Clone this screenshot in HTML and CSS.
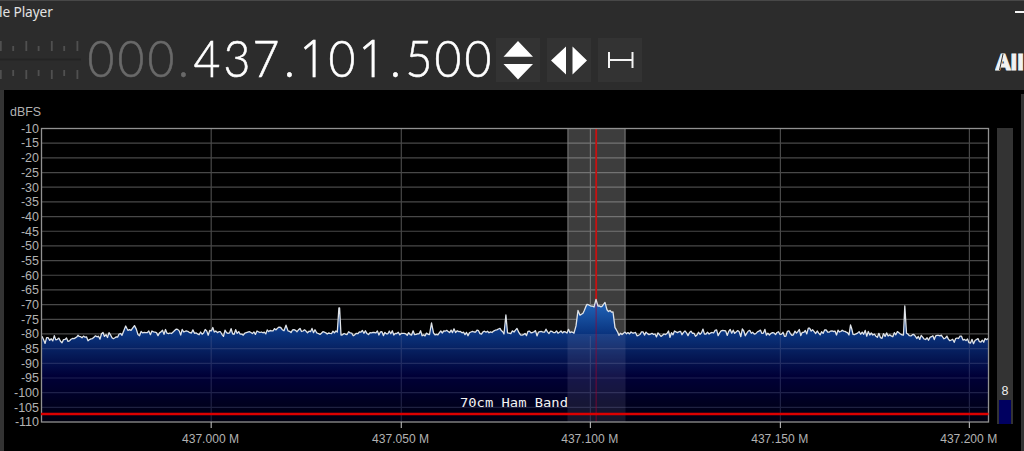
FILE: index.html
```html
<!DOCTYPE html>
<html lang="en">
<head>
<meta charset="utf-8">
<title>Player</title>
<link rel="stylesheet" href="styles.css">
</head>
<body>
<div class="window">
  <header class="titlebar"><span class="title">le Player</span><span class="minimize"></span></header>
  <div class="toolbar">
    <svg class="meter" width="81" height="44" viewBox="0 0 81 44">
      <path class="meter-ticks" d="M.8 4v10M26.3 4v10M51.8 4v10M77.4 4v10M13.2 9v5M38.6 9v5M64.2 9v5M.8 33v9M26.3 33v9M51.8 33v9M77.4 33v9M13.2 33v6M38.6 33v6M64.2 33v6"/>
      <path class="meter-line" d="M0 22.5h81"/>
    </svg>
    <div class="frequency"><span class="dim">0</span><span class="dim">0</span><span class="dim">0</span><span class="dot dim">.</span><span>4</span><span>3</span><span>7</span><span class="dot">.</span><span class="one">1</span><span>0</span><span class="one">1</span><span class="dot">.</span><span>5</span><span>0</span><span>0</span></div>
    <div class="buttons">
      <button class="tool" aria-label="Step"><svg width="44" height="44"><path d="M22 3 37 18.7H7.500zM7.500 26H37L22 41.500z"/></svg></button>
      <button class="tool" aria-label="Tune"><svg width="44" height="44"><path d="M19 8.500v28L4 22.500zM25.500 8.500v28L40 22.500z"/></svg></button>
      <button class="tool" aria-label="Width"><svg width="44" height="44"><path class="span-icon" d="M11 14v16M34.500 14v16M11 22h23.500"/></svg></button>
    </div>
    <svg class="brand" width="29" height="24" viewBox="0 0 29 24">
      <text x="0.500" y="18" textLength="28.500" lengthAdjust="spacingAndGlyphs">AII</text>
      <path d="M4.500 18 8 2"/>
    </svg>
  </div>
  <main class="body">
    <svg class="spectrum" width="986" height="361" viewBox="4 90 986 361">
      <defs>
        <linearGradient id="fill" gradientUnits="userSpaceOnUse" x1="0" y1="300" x2="0" y2="422">
          <stop offset="0" stop-color="#2368bd"/><stop offset=".27" stop-color="#0a3580"/>
          <stop offset=".43" stop-color="#061d5c"/><stop offset=".62" stop-color="#000038"/>
          <stop offset="1" stop-color="#00000f"/>
        </linearGradient>
        <clipPath id="below"><rect x="41" y="336" width="948" height="86"/></clipPath>
      </defs>
      <g id="grid" class="grid"></g>
      <rect class="passband" x="567.500" y="128.500" width="58" height="293.500"/>
      <path class="passband-edge" d="M568 129v293M625 129v293"/>
      <path class="tuning" d="M596.200 129v293"/>
      <path id="area" fill="url(#fill)"/>
      <g clip-path="url(#below)"><g id="gridOver" class="grid grid-over"></g></g>
      <rect class="passband-over" x="567.500" y="334" width="58" height="88"/>
      <path class="tuning-over" d="M596.200 300v122"/>
      <path id="trace" class="trace"/>
      <rect class="frame" x="41.500" y="128.500" width="947" height="293.500"/>
      <path class="band-line" d="M41 414h947.500"/>
      <text class="band-name" x="460" y="407" textLength="108" lengthAdjust="spacingAndGlyphs">70cm Ham Band</text>
      <text class="label" x="10" y="115.500" textLength="31" lengthAdjust="spacingAndGlyphs">dBFS</text>
      <g id="labels" class="label"></g>
    </svg>
    <aside class="side">
      <div class="level"><span class="level-value">8</span><span class="level-bar"></span></div>
      <div class="edge"></div>
    </aside>
  </main>
</div>
<script src="spectrum.js"></script>
</body>
</html>
```
FILE: styles.css
```css
* { box-sizing: border-box; }
body { margin: 0; background: #000; }
.window { width: 1024px; height: 451px; overflow: hidden; background: #2c2c2c; border-top: 1px solid #484848; display: flex; flex-direction: column; }
.titlebar { height: 31px; flex: none; display: flex; justify-content: space-between; overflow: hidden; }
.title { font: 13.700px/21px "Noto Sans", "Open Sans", sans-serif; color: #e2e2e2; letter-spacing: -.1px; margin-left: -1px; white-space: nowrap; }
.minimize { width: 9px; height: 2px; background: #f4f4f4; margin-top: 10px; }
.toolbar { height: 58px; flex: none; display: flex; align-items: flex-start; }
.meter { margin-top: 5px; flex: none; }
.meter-ticks { stroke: #505050; stroke-width: 1.800; }
.meter-line { stroke: #242424; stroke-width: 2; }
.frequency { display: flex; flex: none; margin-left: 5px; width: 409.500px; color: #fff; font: 300 51.500px/51px Lato, sans-serif; -webkit-text-stroke: .6px currentColor; }
.frequency span { width: 29.750px; flex: none; text-align: center; transform: scaleX(.9); }
.frequency .dot { width: 16.600px; display: flex; justify-content: center; }
.frequency .one { font-family: "Open Sans", sans-serif; font-weight: 300; }
.frequency .dim { color: #696969; }
.buttons { display: flex; gap: 7px; padding-top: 6px; flex: none; }
.tool { width: 44px; height: 44px; padding: 0; border: 0; background: #333; display: block; }
.tool svg { display: block; fill: #fff; }
.tool .span-icon { fill: none; stroke: #f4f4f4; stroke-width: 2; }
.brand { margin: 20px 0 0 auto; flex: none; fill: #f2f2f2; font: 900 22.500px Roboto, sans-serif; }
.brand text { stroke: #f2f2f2; stroke-width: .9; }
.brand path { stroke: #2c2c2c; stroke-width: 1; }
.body { flex: 1; display: flex; background: #000; border-left: 4px solid #333; }
.spectrum { display: block; flex: none; overflow: visible; }
.grid { stroke: #484848; stroke-width: 1.200; }
.grid-over { opacity: .28; stroke: #7077a0; }
.passband { fill: #fff; opacity: .24; }
.passband-edge { stroke: #777; fill: none; }
.passband-over { fill: #a7a7cf; opacity: .13; }
.tuning { stroke: #c91010; stroke-width: 1.800; }
.tuning-over { stroke: #a00030; stroke-width: 1.500; opacity: .45; }
.trace { fill: none; stroke: #dfe3e8; stroke-width: 1.300; stroke-linejoin: round; }
.frame { fill: none; stroke: #919191; stroke-width: 1.300; }
.band-line { stroke: #dc0000; stroke-width: 2.600; }
.band-name { fill: #f2f2f2; font: 12.500px "DejaVu Sans Mono", monospace; }
.label { fill: #b2b2b2; font: 12.500px "Liberation Sans", Arial, sans-serif; }
.label .tick { stroke: #aaa; stroke-width: 1.200; }
.side { flex: 1; display: flex; justify-content: space-between; padding-left: 7px; }
.level { width: 16px; height: 296px; margin-top: 38px; background: #333; display: flex; flex-direction: column; align-items: center; justify-content: flex-end; }
.level-value { font: 12.500px/17px "Liberation Sans", Arial, sans-serif; color: #eee; }
.level-bar { width: 12px; height: 24px; background: #000060; }
.edge { width: 3px; margin-top: 4px; background: #333; }
```
FILE: spectrum.js
```js
const grid = [], labels = [];
for (let i = 0; i <= 20; i++) {
  const y = 128.5 + i * 14.675;
  if (i && i < 20) grid.push(`<path d="M42 ${y}H988"/>`);
  labels.push(`<text x="39" y="${y + 4.3}" text-anchor="end">${-10 - i * 5}</text>`);
}
[211.2, 401.3, 590.4, 780.4, 969.4].forEach((x, i) => {
  grid.push(`<path d="M${x} 129V422"/>`);
  labels.push(`<path class="tick" d="M${x} 422v6"/><text x="${x - 29.2}" y="443" textLength="57" lengthAdjust="spacingAndGlyphs">437.${String(i * 50).padStart(3, "0")} M</text>`);
});
document.getElementById("grid").innerHTML = grid.join("");
document.getElementById("gridOver").innerHTML = grid.join("");
document.getElementById("labels").innerHTML = labels.join("");

// Signal levels: [x, y, noise amplitude toward the next sample]
const signal = [
  [42,340,2.3],[62,339.5,2.3],[74,338,1],[78,334.5,1],[82,339,2.5],[97,337,2],[109,333,1.5],[112,338,2],[122,335,.5],
  [125.7,326,.5],[128,330,.5],[131,330,.5],[134.500,326,.5],[138,333,1.6],[155,333,2.5],[170,332.500,1.8],
  [196,331.500,2.5],[225,332,1.7],[260,332.500,1.5],[273,331,1],[279,326.500,1],[284,331,.2],[286,325,.2],[288,331,1.5],
  [315,331,1.5],[320,334,1.5],[337.300,332,0],[338.900,308,0],[339.600,308,0],[341,333,2],[370,333,2],[429.500,334.500,0],
  [431.500,323,0],[433.500,333,1.6],[454,330,1.5],[462,333,1.6],[492,332,.5],[500,328,.5],[504,334,0],[505.900,315,0],
  [507.500,333,1],[514,332,.5],[517,328,.5],[519,333,1.9],[570,332,.5],[574,333,.3],[576,326,.3],[578,310.500,.3],
  [580,315,.5],[583,313,.5],[587,304,.6],[591,306,.6],[594,307,0],[596,299.500,0],[598,306,.5],[602,307,.5],
  [605,302.500,.3],[607,311,1],[613,312,.3],[615,328,.5],[619,333,1.5],[655,334,2.2],[700,333,2.5],[780,332.500,2.2],
  [838,332,1],[845,331,.5],[849,335,0],[850.500,325,0],[853,333,1.8],[882,335,2],[903.500,335,0],[904.800,306,0],
  [906.500,335,1.5],[930,339,2],[940,335,1],[944,339,2],[960,339.500,1.8],[978,341.500,2],[988,338.500,0]
];
let seed = 9;
const random = () => (seed = seed * 16807 % 2147483647) / 2147483647;
const points = [];
for (let i = 0; i < signal.length - 1; i++) {
  const [x, y, noise] = signal[i], [nextX, nextY] = signal[i + 1];
  const steps = Math.max(1, Math.round((nextX - x) / 1.5));
  for (let k = 0; k < steps; k++) {
    const f = k / steps;
    const n = (random() + random() - 1) * noise * 2;
    points.push(`${(x + (nextX - x) * f).toFixed(1)} ${(y + (nextY - y) * f + n).toFixed(1)}`);
  }
}
points.push("988 338.5");
const line = "M" + points.join("L");
document.getElementById("trace").setAttribute("d", line);
document.getElementById("area").setAttribute("d", line + "V422H42Z");
```
